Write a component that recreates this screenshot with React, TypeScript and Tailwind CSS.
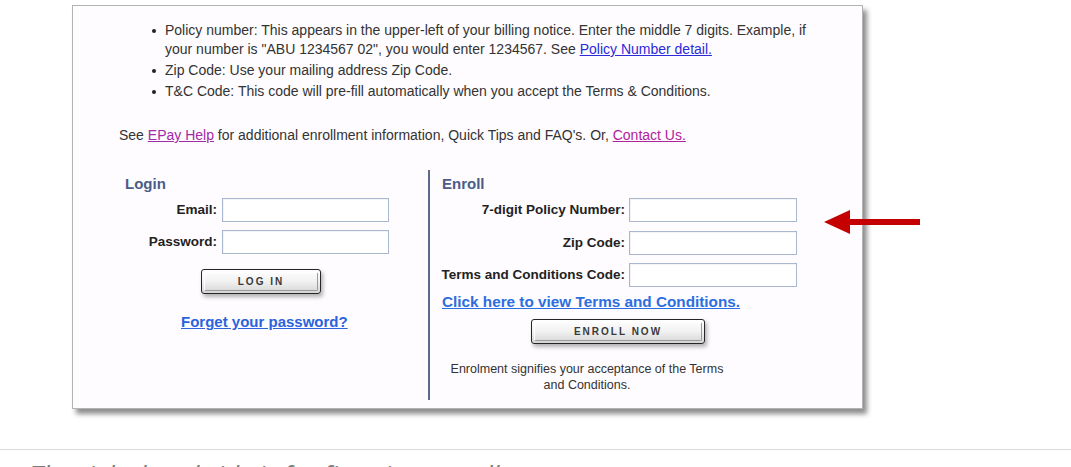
import type { ReactNode } from "react";

const TIPS: ReactNode[] = [
  <>
    Policy number: This appears in the upper-left of your billing notice. Enter the middle 7 digits. Example, if
    <br />
    your number is &quot;ABU 1234567 02&quot;, you would enter 1234567. See{" "}
    <a href="#" className="text-[#2b2bd9] underline">
      Policy Number detail.
    </a>
  </>,
  <>Zip Code: Use your mailing address Zip Code.</>,
  <>T&amp;C Code: This code will pre-fill automatically when you accept the Terms &amp; Conditions.</>,
];

function Field({ label }: { label: string }) {
  return (
    <>
      <label className="whitespace-nowrap text-right text-[13.5px] font-bold leading-[24px] text-[#222]">{label}</label>
      <input
        type="text"
        className="h-[24px] border border-[#a9b8d0] bg-white shadow-[inset_1px_1px_1px_rgba(0,0,0,0.05)] outline-none"
      />
    </>
  );
}

function OldButton({ label, width }: { label: string; width: string }) {
  return (
    <button
      className={`${width} h-[25px] rounded-[3px] border border-[#262626] bg-gradient-to-b from-white via-[#f1f1f1] to-[#d4d4d4] p-[2px] shadow-[2px_3px_4px_rgba(0,0,0,0.3)]`}
    >
      <span className="flex h-full items-center justify-center rounded-[2px] border border-b-[#9a9a9a] border-r-[#9a9a9a] border-l-white border-t-white text-[10px] font-bold tracking-[2px] text-[#3a3a3a]">
        {label}
      </span>
    </button>
  );
}

export default function App() {
  return (
    <div className="relative h-[467px] w-full overflow-hidden bg-white font-['Liberation_Sans',Arial,sans-serif]">
      {/* captured enrollment page */}
      <div className="ml-[72px] mt-[5px] h-[404px] w-[791px] border border-[#b3b3b3] bg-[#fefcfe] text-[14px] text-[#333] shadow-[4px_5px_5px_rgba(0,0,0,0.45)]">
        <ul className="flex flex-col gap-[2px] pl-[79px] pt-[15px] leading-[19px]">
          {TIPS.map((tip, i) => (
            <li key={i} className="flex whitespace-nowrap">
              <span className="w-[13px] shrink-0 pt-[8px]">
                <span className="block h-[4px] w-[4px] rounded-full bg-[#222]" />
              </span>
              <span>{tip}</span>
            </li>
          ))}
        </ul>

        <p className="mt-[25px] pl-[46px] leading-[19px]">
          See{" "}
          <a href="#" className="text-[#a22aa6] underline">
            EPay Help
          </a>{" "}
          for additional enrollment information, Quick Tips and FAQ&apos;s. Or,{" "}
          <a href="#" className="text-[#b0229c] underline">
            Contact Us.
          </a>
        </p>

        <div className="mt-[25px] flex h-[230px]">
          {/* Login */}
          <div className="w-[355px]">
            <h3 className="ml-[52px] mt-[6px] font-['Liberation_Sans',Arial,sans-serif] text-[15px] font-semibold leading-[16px] text-[#4b5c88]">
              Login
            </h3>
            <div className="mt-[6px] grid grid-cols-[144px_167px] gap-x-[5px] gap-y-[8px]">
              <Field label="Email:" />
              <Field label="Password:" />
            </div>
            <div className="ml-[128px] mt-[15px]">
              <OldButton label="LOG IN" width="w-[120px]" />
            </div>
            <a
              href="#"
              className="ml-[108px] mt-[20px] block text-[15px] font-bold leading-[16px] text-[#2a63dc] underline"
            >
              Forget your password?
            </a>
          </div>

          <div className="w-[2px] bg-[#5b6a8c]" />

          {/* Enroll */}
          <div className="flex-1">
            <h3 className="ml-[12px] mt-[6px] font-['Liberation_Sans',Arial,sans-serif] text-[15px] font-semibold leading-[16px] text-[#4b5c88]">
              Enroll
            </h3>
            <div className="mt-[6px] grid grid-cols-[195px_168px] gap-x-[4px] gap-y-[8.5px]">
              <Field label="7-digit Policy Number:" />
              <Field label="Zip Code:" />
              <Field label="Terms and Conditions Code:" />
            </div>
            <a
              href="#"
              className="ml-[12px] mt-[7px] block whitespace-nowrap text-[15.3px] font-bold leading-[16px] text-[#2c6ee0] underline"
            >
              Click here to view Terms and Conditions.
            </a>
            <div className="ml-[101px] mt-[9px]">
              <OldButton label="ENROLL NOW" width="w-[174px]" />
            </div>
            <p className="ml-[7px] mt-[17px] w-[300px] text-center text-[12.5px] leading-[16px] text-[#333]">
              Enrolment signifies your acceptance of the Terms
              <br />
              and Conditions.
            </p>
          </div>
        </div>
      </div>

      {/* callout arrow */}
      <svg className="absolute left-[822px] top-[208px]" width="100" height="28" viewBox="0 0 100 28">
        <polygon points="2,14 28,2 28,11 98,11 98,17 28,17 28,26" fill="#c40000" />
      </svg>

      <div className="mt-[40px] border-t border-[#d9d9d9]" />
      <p className="pl-[30px] pt-[8px] font-['Open_Sans',sans-serif] text-[26px] italic leading-[32px] text-[#7a7a7a]">
        The right-hand side is for first-time enrollment.
      </p>
    </div>
  );
}
